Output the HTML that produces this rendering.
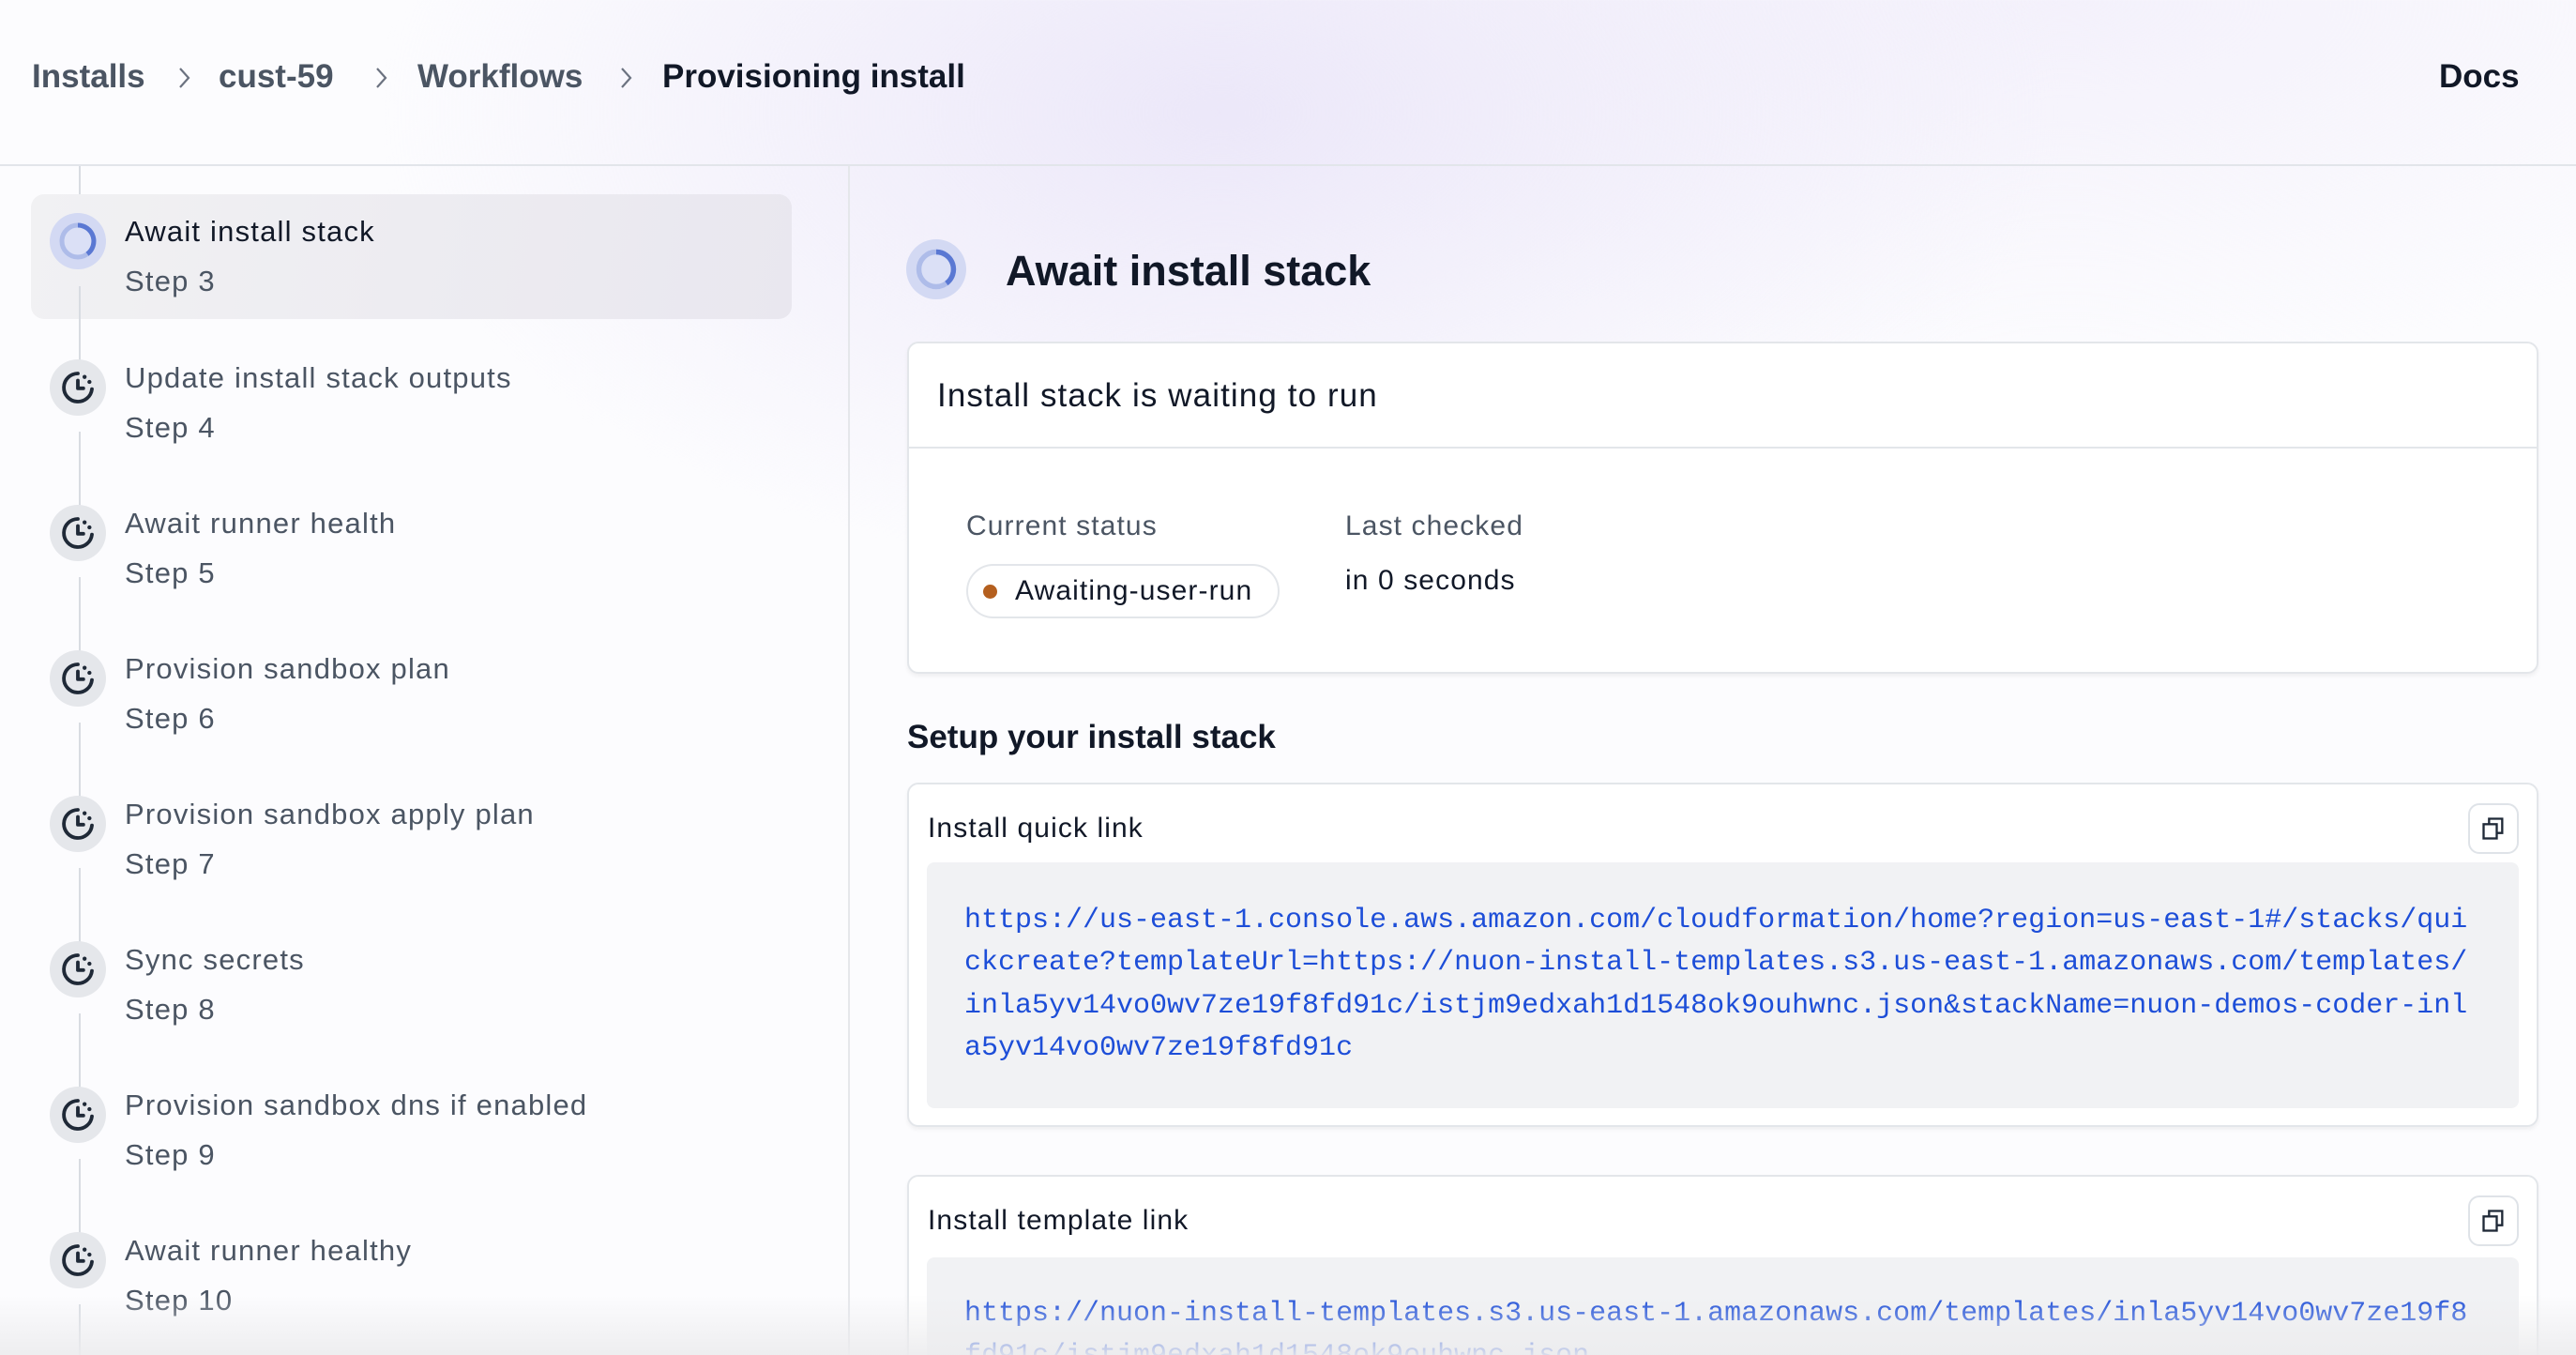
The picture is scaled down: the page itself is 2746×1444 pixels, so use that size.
<!DOCTYPE html>
<html><head><meta charset="utf-8">
<style>
*{margin:0;padding:0;box-sizing:border-box}
html,body{width:2746px;height:1444px;overflow:hidden}
body{font-family:"Liberation Sans",sans-serif;position:relative;background:#fcfcfe;
background-image:radial-gradient(ellipse 900px 500px at 1300px 120px,rgba(233,228,248,.85),rgba(255,255,255,0) 100%),radial-gradient(ellipse 900px 400px at 2200px 0px,rgba(240,236,250,.7),rgba(255,255,255,0) 100%);}
.abs{position:absolute;white-space:nowrap}
.ls{letter-spacing:1.1px}
.bc{top:62px;font-size:35px;font-weight:600;color:#4b5563;line-height:40px}
.chev{position:absolute;top:70px}
.hdr{position:absolute;left:0;top:175px;width:2746px;height:2px;background:#e2e5ea}
.vsep{position:absolute;left:904px;top:177px;width:2px;height:1267px;background:#e5e7eb}
.tl{position:absolute;left:84px;width:2px;background:#d8dce2}
.sel{position:absolute;left:33px;top:207px;width:811px;height:133px;border-radius:14px;background:linear-gradient(100deg,#f1f1f3,#e9e7ef)}
.ic{position:absolute;width:60px;height:60px;border-radius:50%;background:#e5e7eb;display:flex;align-items:center;justify-content:center}
.st{position:absolute;left:133px;font-size:31px;color:#4b5563;letter-spacing:1.2px;line-height:36px;white-space:nowrap}
.card{position:absolute;background:#fff;border:2px solid #e3e6ea;border-radius:12px;box-shadow:0 3px 4px rgba(0,0,0,.05)}
.code{position:absolute;background:#f1f2f4;border-radius:8px;font-family:"Liberation Mono",monospace;font-size:30px;color:#1d4ed8;line-height:45.3px;padding-left:40px;white-space:pre}
.cp{position:absolute;width:54px;height:54px;border:2px solid #dfe3e8;border-radius:12px;background:#fff;display:flex;align-items:center;justify-content:center}
.fade{position:absolute;left:0;top:1380px;width:2746px;height:64px;background:linear-gradient(rgba(240,240,242,0),rgba(236,236,238,.9))}
</style></head><body>
<div class="abs bc" style="left:34px">Installs</div>
<svg class="chev" style="left:187px" width="20" height="26" viewBox="0 0 20 26"><path d="M5 3l9 10-9 10" fill="none" stroke="#6b7280" stroke-width="2.2"/></svg>
<div class="abs bc" style="left:233px">cust-59</div>
<svg class="chev" style="left:397px" width="20" height="26" viewBox="0 0 20 26"><path d="M5 3l9 10-9 10" fill="none" stroke="#6b7280" stroke-width="2.2"/></svg>
<div class="abs bc" style="left:445px">Workflows</div>
<svg class="chev" style="left:658px" width="20" height="26" viewBox="0 0 20 26"><path d="M5 3l9 10-9 10" fill="none" stroke="#6b7280" stroke-width="2.2"/></svg>
<div class="abs bc" style="left:706px;color:#111827">Provisioning install</div>
<div class="abs bc" style="left:2600px;color:#111827">Docs</div>
<div class="hdr"></div>
<div class="vsep"></div>

<div class="tl" style="top:177px;height:30px"></div>
<div class="sel"></div>
<div class="tl" style="top:305px;height:80px"></div>
<div class="tl" style="top:460px;height:80px"></div>
<div class="tl" style="top:615px;height:80px"></div>
<div class="tl" style="top:770px;height:80px"></div>
<div class="tl" style="top:925px;height:80px"></div>
<div class="tl" style="top:1080px;height:80px"></div>
<div class="tl" style="top:1235px;height:80px"></div>
<div class="tl" style="top:1390px;height:60px"></div>

<div class="ic" style="left:53px;top:227px;background:#d3d9f3">
<svg width="46" height="46" viewBox="0 0 46 46"><circle cx="23" cy="23" r="17" fill="#dbe0f6" stroke="#aebce9" stroke-width="5"/><path d="M23 6 A17 17 0 0 1 33 36.7" fill="none" stroke="#5a78d3" stroke-width="5"/></svg></div>
<div class="st" style="top:229px;color:#111827">Await install stack</div>
<div class="st" style="top:282px">Step 3</div>

<svg width="0" height="0" style="position:absolute"><defs><g id="clk"><path d="M12 3A9 9 0 1 0 21 13" fill="none" stroke="#1f2937" stroke-width="2.3" stroke-linecap="round"/><circle cx="16.3" cy="5.2" r="1.3" fill="#1f2937"/><circle cx="19.4" cy="8.4" r="1.3" fill="#1f2937"/><path d="M12 7.5v5h3.5" fill="none" stroke="#1f2937" stroke-width="2.3" stroke-linecap="round" stroke-linejoin="round"/></g></defs></svg>

<div class="ic" style="left:53px;top:383px"><svg width="40" height="40" viewBox="0 0 24 24"><use href="#clk"/></svg></div>
<div class="st" style="top:385px">Update install stack outputs</div><div class="st" style="top:438px">Step 4</div>
<div class="ic" style="left:53px;top:538px"><svg width="40" height="40" viewBox="0 0 24 24"><use href="#clk"/></svg></div>
<div class="st" style="top:540px">Await runner health</div><div class="st" style="top:593px">Step 5</div>
<div class="ic" style="left:53px;top:693px"><svg width="40" height="40" viewBox="0 0 24 24"><use href="#clk"/></svg></div>
<div class="st" style="top:695px">Provision sandbox plan</div><div class="st" style="top:748px">Step 6</div>
<div class="ic" style="left:53px;top:848px"><svg width="40" height="40" viewBox="0 0 24 24"><use href="#clk"/></svg></div>
<div class="st" style="top:850px">Provision sandbox apply plan</div><div class="st" style="top:903px">Step 7</div>
<div class="ic" style="left:53px;top:1003px"><svg width="40" height="40" viewBox="0 0 24 24"><use href="#clk"/></svg></div>
<div class="st" style="top:1005px">Sync secrets</div><div class="st" style="top:1058px">Step 8</div>
<div class="ic" style="left:53px;top:1158px"><svg width="40" height="40" viewBox="0 0 24 24"><use href="#clk"/></svg></div>
<div class="st" style="top:1160px">Provision sandbox dns if enabled</div><div class="st" style="top:1213px">Step 9</div>
<div class="ic" style="left:53px;top:1313px"><svg width="40" height="40" viewBox="0 0 24 24"><use href="#clk"/></svg></div>
<div class="st" style="top:1315px">Await runner healthy</div><div class="st" style="top:1368px">Step 10</div>

<div class="ic" style="left:966px;top:255px;width:64px;height:64px;background:#d3d9f3">
<svg width="50" height="50" viewBox="0 0 46 46"><circle cx="23" cy="23" r="17" fill="#dbe0f6" stroke="#aebce9" stroke-width="5"/><path d="M23 6 A17 17 0 0 1 33 36.7" fill="none" stroke="#5a78d3" stroke-width="5"/></svg></div>
<div class="abs" style="left:1072px;top:262px;font-size:45px;font-weight:600;color:#111827;line-height:54px">Await install stack</div>

<div class="card" style="left:967px;top:364px;width:1739px;height:354px">
<div style="position:absolute;left:0;top:110px;width:100%;height:2px;background:#e3e6ea"></div>
<div class="abs ls" style="left:30px;top:36px;font-size:35px;color:#111827">Install stack is waiting to run</div>
<div class="abs ls" style="left:61px;top:178px;font-size:30px;color:#4b5563">Current status</div>
<div class="abs ls" style="left:465px;top:178px;font-size:30px;color:#4b5563">Last checked</div>
<div style="position:absolute;left:61px;top:235px;width:334px;height:58px;border:2px solid #e3e6ea;border-radius:29px">
<div style="position:absolute;left:16px;top:20px;width:15px;height:15px;border-radius:50%;background:#b45f1e"></div>
<div class="abs ls" style="left:50px;top:10px;font-size:30px;color:#111827">Awaiting-user-run</div></div>
<div class="abs ls" style="left:465px;top:236px;font-size:30px;color:#111827">in 0 seconds</div>
</div>

<div class="abs" style="left:967px;top:766px;font-size:35px;font-weight:600;color:#111827">Setup your install stack</div>

<div class="card" style="left:967px;top:834px;width:1739px;height:367px">
<div class="abs ls" style="left:20px;top:30px;font-size:30px;color:#111827">Install quick link</div>
<div class="cp" style="left:1662px;top:20px"><svg width="28" height="28" viewBox="0 0 24 24" fill="none" stroke="#1f2937" stroke-width="2"><rect x="3" y="8" width="12" height="13"/><path d="M8 8V3h12v13h-5"/></svg></div>
<div class="code" style="left:19px;top:83px;width:1697px;height:262px;padding-top:40px">https://us-east-1.console.aws.amazon.com/cloudformation/home?region=us-east-1#/stacks/qui
ckcreate?templateUrl=https://nuon-install-templates.s3.us-east-1.amazonaws.com/templates/
inla5yv14vo0wv7ze19f8fd91c/istjm9edxah1d1548ok9ouhwnc.json&amp;stackName=nuon-demos-coder-inl
a5yv14vo0wv7ze19f8fd91c</div>
</div>

<div class="card" style="left:967px;top:1252px;width:1739px;height:260px">
<div class="abs ls" style="left:20px;top:30px;font-size:30px;color:#111827">Install template link</div>
<div class="cp" style="left:1662px;top:20px"><svg width="28" height="28" viewBox="0 0 24 24" fill="none" stroke="#1f2937" stroke-width="2"><rect x="3" y="8" width="12" height="13"/><path d="M8 8V3h12v13h-5"/></svg></div>
<div class="code" style="left:19px;top:86px;width:1697px;height:200px;padding-top:38px">https://nuon-install-templates.s3.us-east-1.amazonaws.com/templates/inla5yv14vo0wv7ze19f8
fd91c/istjm9edxah1d1548ok9ouhwnc.json</div>
</div>
<div class="fade"></div>
</body></html>
